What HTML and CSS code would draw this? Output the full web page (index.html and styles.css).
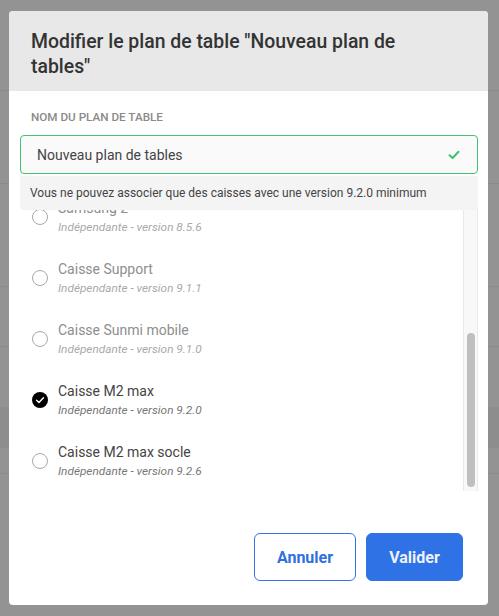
FILE: index.html
```html
<!DOCTYPE html>
<html lang="fr">
<head>
<meta charset="utf-8">
<title>Modifier le plan de table</title>
<link rel="stylesheet" href="styles.css">
</head>
<body>
<div class="backdrop">
  <div class="modal">
    <div class="modal-header">
      <h1 class="modal-title">Modifier le plan de table "Nouveau plan de tables"</h1>
    </div>
    <div class="modal-body">
      <div class="field-label">NOM DU PLAN DE TABLE</div>
      <div class="input">
        <span class="input-value">Nouveau plan de tables</span>
        <svg class="input-check" width="12" height="10" viewBox="0 0 12 10"><path d="M1.5 5.2 L4.6 8 L10.5 1.8" fill="none" stroke="#3fc26f" stroke-width="2" stroke-linecap="round" stroke-linejoin="round"/></svg>
      </div>
      <div class="list-wrap">
        <div class="list">
          <div class="item disabled"><span class="radio"></span><div class="item-text"><div class="item-name">Samsung 2</div><div class="item-sub">Indépendante - version 8.5.6</div></div></div>
          <div class="item disabled"><span class="radio"></span><div class="item-text"><div class="item-name">Caisse Support</div><div class="item-sub">Indépendante - version 9.1.1</div></div></div>
          <div class="item disabled"><span class="radio"></span><div class="item-text"><div class="item-name">Caisse Sunmi mobile</div><div class="item-sub">Indépendante - version 9.1.0</div></div></div>
          <div class="item"><span class="radio checked"><svg width="16" height="16" viewBox="0 0 16 16"><circle cx="8" cy="8" r="8" fill="#000"/><path d="M4.6 8.3 L7 10.5 L11.4 5.8" fill="none" stroke="#fff" stroke-width="1.4" stroke-linecap="round" stroke-linejoin="round"/></svg></span><div class="item-text"><div class="item-name">Caisse M2 max</div><div class="item-sub">Indépendante - version 9.2.0</div></div></div>
          <div class="item"><span class="radio"></span><div class="item-text"><div class="item-name">Caisse M2 max socle</div><div class="item-sub">Indépendante - version 9.2.6</div></div></div>
        </div>
        <div class="scrollbar"><div class="scroll-thumb"></div></div>
        <div class="tooltip">Vous ne pouvez associer que des caisses avec une version 9.2.0 minimum</div>
      </div>
    </div>
    <div class="modal-footer">
      <button class="btn btn-outline">Annuler</button>
      <button class="btn btn-primary">Valider</button>
    </div>
  </div>
</div>
</body>
</html>
```

FILE: styles.css
```css
* { box-sizing: border-box; }
html, body { margin: 0; padding: 0; }
body {
  width: 499px;
  height: 616px;
  overflow: hidden;
  font-family: Roboto, "Liberation Sans", sans-serif;
  background-color: #939393;
  background-image: linear-gradient(to bottom,
    transparent 0, transparent 90px, #8b8b8b 90px, #8b8b8b 91px, transparent 91px,
    transparent 183px, #8b8b8b 183px, #8b8b8b 184px, transparent 184px,
    transparent 286px, #8b8b8b 286px, #8b8b8b 287px, transparent 287px,
    transparent 346px, #8b8b8b 346px, #8b8b8b 347px, transparent 347px,
    transparent 407px, #8d8d8d 407px, #8d8d8d 448px, transparent 448px,
    transparent 473px, #8b8b8b 473px, #8b8b8b 474px, transparent 474px);
}
.backdrop {
  padding: 11px 0 0 9px;
}
.modal {
  width: 479px;
  height: 594px;
  background: #fff;
  border-radius: 4px;
  overflow: hidden;
  display: flex;
  flex-direction: column;
}
.modal-header {
  background: #e8e8e8;
  padding: 18px 70px 12px 22px;
  height: 80px;
}
.modal-title {
  margin: 0;
  font-size: 19.4px;
  line-height: 25px;
  font-weight: 500;
  color: #333;
}
.modal-body {
  padding: 19px 10px 0 11px;
}
.field-label {
  margin-left: 11px;
  font-size: 11.7px;
  line-height: 14px;
  font-weight: 500;
  color: #8a8a8a;
}
.input {
  margin-top: 11px;
  height: 39px;
  border: 1px solid #43c26f;
  border-radius: 4px;
  background: #fafafa;
  display: flex;
  align-items: center;
  justify-content: space-between;
  padding: 0 17px 0 16px;
}
.input-value {
  font-size: 14px;
  color: #444;
}
.input-check { display: block; }
.list-wrap {
  position: relative;
  margin-top: 2px;
}
.list {
  height: 315px;
  overflow: hidden;
  display: flex;
  flex-direction: column;
  justify-content: flex-end;
  padding-right: 15px;
}
.scrollbar {
  position: absolute;
  top: 0;
  right: 0;
  bottom: 0;
  width: 15px;
  background: #f8f8f8;
  border-left: 1px solid #e9e9e9;
  border-right: 1px solid #e9e9e9;
}
.scroll-thumb {
  position: absolute;
  left: 3px;
  width: 8px;
  bottom: 4px;
  height: 154px;
  border-radius: 4px;
  background: #bfbfbf;
}
.tooltip {
  position: absolute;
  top: 0;
  left: 0;
  right: 0;
  height: 34px;
  background: #f4f4f4;
  border-radius: 0 0 4px 4px;
  padding: 0 10px;
  font-size: 12px;
  line-height: 34px;
  color: #444;
}
.item {
  flex: none;
  display: flex;
  align-items: center;
  gap: 10px;
  padding: 12px 0 11px 12px;
}
.radio {
  width: 16px;
  height: 16px;
  border-radius: 50%;
  border: 1px solid #a8a8a8;
  flex: none;
  background: #fff;
}
.radio.checked {
  border: none;
  background: none;
}
.radio.checked svg { display: block; }
.item-name {
  font-size: 14px;
  line-height: 20px;
  color: #444;
}
.item-sub {
  font-size: 11.8px;
  line-height: 18px;
  font-style: italic;
  color: #777;
}
.item.disabled .item-name { color: #8e8e8e; }
.item.disabled .item-sub { color: #a9a9a9; }
.modal-footer {
  display: flex;
  justify-content: flex-end;
  gap: 10px;
  padding: 42px 25px 24px 0;
}
.btn {
  height: 48px;
  border-radius: 6px;
  font-family: Roboto, "Liberation Sans", sans-serif;
  font-size: 16px;
  font-weight: 700;
  cursor: pointer;
}
.btn-outline {
  width: 102px;
  background: #fff;
  border: 1px solid #3573e0;
  color: #2f6fe0;
}
.btn-primary {
  width: 97px;
  background: #2f72e6;
  border: 1px solid #2f72e6;
  color: #eef2fb;
}
```
